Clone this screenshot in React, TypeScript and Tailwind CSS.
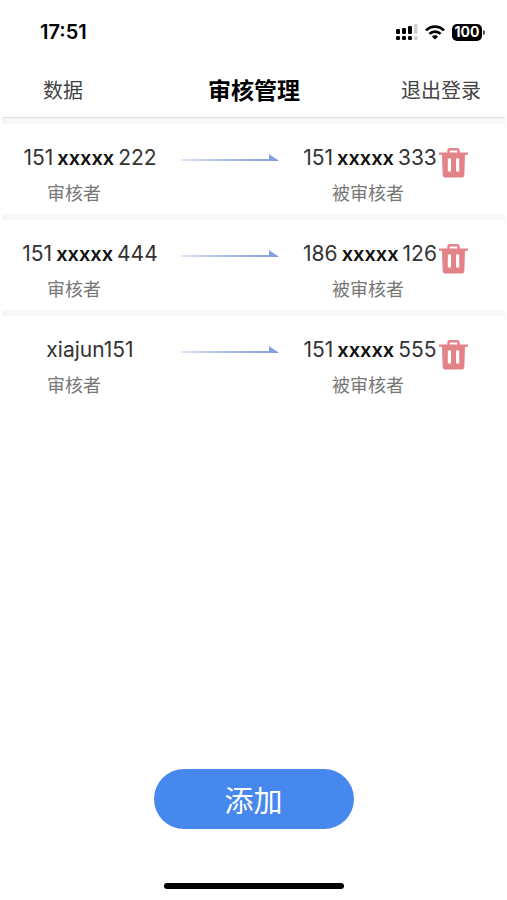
type Account = { head: string; masked?: boolean; tail?: string };
type Review = { id: number; reviewer: Account; reviewee: Account };

const reviews: Review[] = [
  {
    id: 1,
    reviewer: { head: "151", masked: true, tail: "222" },
    reviewee: { head: "151", masked: true, tail: "333" },
  },
  {
    id: 2,
    reviewer: { head: "151", masked: true, tail: "444" },
    reviewee: { head: "186", masked: true, tail: "126" },
  },
  {
    id: 3,
    reviewer: { head: "xiajun151" },
    reviewee: { head: "151", masked: true, tail: "555" },
  },
];

function SignalIcon() {
  return (
    <svg width="22" height="16" viewBox="0 0 22 16" aria-hidden="true">
      <g fill="#000">
        <rect x="0" y="5" width="4" height="5" rx="1.2" />
        <rect x="6" y="4" width="4" height="6" rx="1.2" />
        <rect x="12" y="2" width="4" height="8" rx="1.2" />
        <rect x="0" y="12" width="4" height="4" rx="1.2" />
        <rect x="6" y="12" width="4" height="4" rx="1.2" />
        <rect x="12" y="12" width="4" height="4" rx="1.2" />
      </g>
      <g fill="#cfcfcf">
        <rect x="18" y="0" width="3.5" height="10" rx="1.2" />
        <rect x="18" y="12" width="3.5" height="4" rx="1.2" />
      </g>
    </svg>
  );
}

function WifiIcon() {
  return (
    <svg width="20" height="15" viewBox="0 0 20 15" aria-hidden="true">
      <g fill="none" stroke="#000" strokeWidth="2.7">
        <path d="M1 5.4C6 0.3 14 0.3 19 5.4" />
        <path d="M4.4 8.9C7.6 5.8 12.4 5.8 15.6 8.9" />
      </g>
      <path d="M10 14.6 6.9 11.5C8.6 9.9 11.4 9.9 13.1 11.5Z" fill="#000" />
    </svg>
  );
}

function ArrowIcon() {
  return (
    <svg width="98" height="10" viewBox="0 0 98 10" aria-hidden="true">
      <defs>
        <linearGradient id="shaft" x1="0" x2="1" y1="0" y2="0">
          <stop offset="0" stopColor="#dfe4f2" />
          <stop offset="0.5" stopColor="#a9b9e2" />
          <stop offset="1" stopColor="#84a0de" />
        </linearGradient>
      </defs>
      <rect x="0" y="6" width="96" height="2" fill="url(#shaft)" />
      <path d="M88 1 98 8H88Z" fill="#84a0de" />
    </svg>
  );
}

function TrashIcon() {
  return (
    <svg width="29" height="30" viewBox="0 0 29 30" aria-hidden="true">
      <path d="M9.5 5V2.8Q9.5 1.2 11 1.2H18Q19.5 1.2 19.5 2.8V5" fill="none" stroke="#e38287" strokeWidth="2.4" />
      <path
        fillRule="evenodd"
        fill="#e38287"
        d="M0 4.5H29V6.8H26L25.3 27Q25.2 29.5 22.7 29.5H6.3Q3.8 29.5 3.7 27L3 6.8H0ZM8.8 10.5V23.5H12V10.5ZM17 10.5V23.5H20.2V10.5Z"
      />
    </svg>
  );
}

function AccountName({ account }: { account: Account }) {
  return (
    <span className="flex items-baseline justify-center gap-1 text-[21px] leading-8 whitespace-nowrap text-[#333]">
      <span>{account.head}</span>
      {account.masked && <span className="text-xl leading-8 font-semibold text-[#111]">xxxxx</span>}
      {account.tail && <span>{account.tail}</span>}
    </span>
  );
}

function ReviewRow({ review }: { review: Review }) {
  return (
    <li className="flex h-24 items-start border-t-6 border-[#f7f7f7] pt-[18px]">
      <div className="min-w-0 flex-1 pr-[3px]">
        <AccountName account={review.reviewer} />
        <p className="pt-1 pr-8 text-center text-lg leading-8 text-[#777]">审核者</p>
      </div>
      <div className="flex h-8 shrink-0 items-center">
        <ArrowIcon />
      </div>
      <div className="w-[160px] shrink-0 pl-[22px]">
        <AccountName account={review.reviewee} />
        <p className="pt-1 pr-1 text-center text-lg leading-8 text-[#777]">被审核者</p>
      </div>
      <button type="button" aria-label="删除" className="mt-1.5 mr-[37px] shrink-0 cursor-pointer">
        <TrashIcon />
      </button>
    </li>
  );
}

export default function App() {
  return (
    <div className="flex min-h-screen flex-col bg-white px-0.5 font-['Inter','Noto_Sans_CJK_SC',sans-serif]">
      <div className="flex h-16 items-center justify-between pr-5 pl-[38px]">
        <time className="text-xl leading-6 font-semibold text-black">17:51</time>
        <div className="flex items-center gap-[7px]">
          <SignalIcon />
          <WifiIcon />
          <div className="flex items-center gap-px">
            <span className="flex h-[17px] w-[30px] items-center justify-center rounded-[5px] bg-black text-sm leading-4 font-bold text-white">
              100
            </span>
            <span className="h-[5px] w-0.5 rounded-r-sm bg-[#555]" />
          </div>
        </div>
      </div>

      <header className="grid h-[54px] grid-cols-[1fr_auto_1fr] items-center border-b border-[#dedede] pr-6 pl-[41px]">
        <a href="#data" className="justify-self-start text-xl text-[#444]">
          数据
        </a>
        <h1 className="pr-4 text-[23px] leading-8 font-bold text-black">审核管理</h1>
        <a href="#logout" className="justify-self-end text-xl text-[#444]">
          退出登录
        </a>
      </header>

      <ul>
        {reviews.map((review) => (
          <ReviewRow key={review.id} review={review} />
        ))}
      </ul>

      <footer className="mt-auto flex flex-col items-center gap-[54px] pb-[11px]">
        <button
          type="button"
          className="h-[60px] w-[200px] cursor-pointer rounded-full bg-[#4688ee] pt-1.5 text-[29px] leading-10 text-white"
        >
          添加
        </button>
        <div className="h-1.5 w-[180px] rounded-full bg-black" />
      </footer>
    </div>
  );
}
